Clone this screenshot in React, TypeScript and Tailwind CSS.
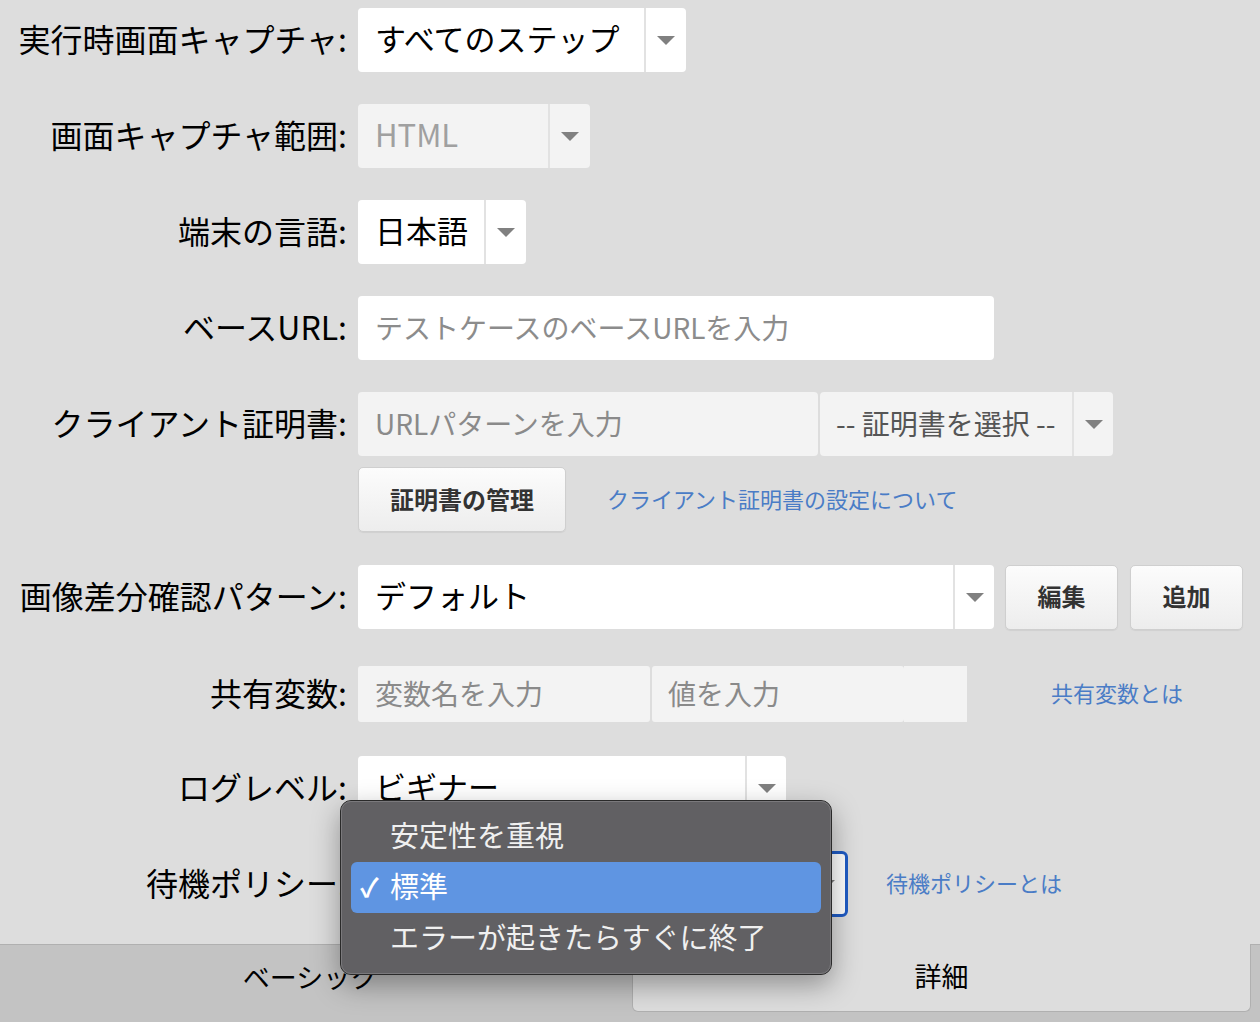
import React from "react";

const Tri = () => (
  <div className="w-0 h-0 border-l-[9px] border-r-[9px] border-t-[9px] border-l-transparent border-r-transparent border-t-[#808080]" />
);

function Arrow({ cls }: { cls: string }) {
  return (
    <div className={"flex items-center h-full " + cls}>
      <div className="w-[2px] h-full bg-[#e2e2e2]" />
      <div className="flex-1 flex items-center justify-center">
        <Tri />
      </div>
    </div>
  );
}

function Row({ label, children, cls }: { label: string; children: React.ReactNode; cls: string }) {
  return (
    <div className={"flex items-center h-[64px] " + cls}>
      <div className="w-[347px] shrink-0 text-right text-[32px] text-black whitespace-nowrap leading-none pb-[4px]">{label}</div>
      <div className="ml-[11px] flex items-center h-full">{children}</div>
    </div>
  );
}

const btn =
  "flex items-center justify-center rounded-[5px] border border-[#cfcfcf] bg-gradient-to-b from-[#fcfcfc] to-[#ededed] shadow-[0_1px_1px_rgba(0,0,0,0.06)] text-[24px] font-bold text-[#333] pb-[2px]";

const selText = "flex-1 flex items-center pl-[17px] text-[31px] pb-[4px]";

export default function App() {
  return (
    <div className="relative w-[1260px] h-[1022px] overflow-hidden bg-[#dddddd] font-['Noto_Sans_CJK_JP','Noto_Sans',sans-serif]">
      <div className="flex flex-col pt-[8px]">
        <Row label="実行時画面キャプチャ:" cls="">
          <div className="flex h-[64px] w-[328px] rounded-[4px] bg-white">
            <div className={selText + " text-black"}>すべてのステップ</div>
            <Arrow cls="w-[42px]" />
          </div>
        </Row>

        <Row label="画面キャプチャ範囲:" cls="mt-[32px]">
          <div className="flex h-[64px] w-[232px] rounded-[4px] bg-[#f3f3f3]">
            <div className={selText + " text-[#a0a0a0]"}>HTML</div>
            <Arrow cls="w-[42px]" />
          </div>
        </Row>

        <Row label="端末の言語:" cls="mt-[32px]">
          <div className="flex h-[64px] w-[168px] rounded-[4px] bg-white">
            <div className={selText + " text-black"}>日本語</div>
            <Arrow cls="w-[42px]" />
          </div>
        </Row>

        <Row label="ベースURL:" cls="mt-[32px]">
          <div className="flex items-center h-[64px] w-[636px] rounded-[4px] bg-white pl-[17px] pb-[3px] text-[28px] text-[#8c8c8c]">
            テストケースのベースURLを入力
          </div>
        </Row>

        <Row label="クライアント証明書:" cls="mt-[32px]">
          <div className="flex items-center h-[64px] w-[460px] rounded-[4px] bg-[#f3f3f3] pl-[17px] pb-[3px] text-[28px] text-[#8a8a8a]">
            URLパターンを入力
          </div>
          <div className="ml-[2px] flex h-[64px] w-[293px] rounded-[4px] bg-[#f3f3f3]">
            <div className="flex-1 flex items-center pl-[16px] pb-[3px] text-[28px] text-[#555]">-- 証明書を選択 --</div>
            <Arrow cls="w-[41px]" />
          </div>
        </Row>

        <div className="flex items-center h-[65px] mt-[11px]">
          <div className="w-[358px] shrink-0" />
          <div className={btn + " w-[208px] h-[65px]"}>証明書の管理</div>
          <div className="ml-[41px] pb-[3px] text-[22px] text-[#4a7cc6]">クライアント証明書の設定について</div>
        </div>

        <Row label="画像差分確認パターン:" cls="mt-[33px]">
          <div className="flex h-[64px] w-[636px] rounded-[4px] bg-white">
            <div className={selText + " text-black"}>デフォルト</div>
            <Arrow cls="w-[41px]" />
          </div>
          <div className={btn + " ml-[11px] w-[113px] h-[65px]"}>編集</div>
          <div className={btn + " ml-[12px] w-[113px] h-[65px]"}>追加</div>
        </Row>

        <Row label="共有変数:" cls="mt-[33px]">
          <div className="flex items-center h-[56px] w-[292px] rounded-[3px] bg-[#f3f3f3] pl-[17px] pb-[3px] text-[28px] text-[#8a8a8a]">
            変数名を入力
          </div>
          <div className="ml-[2px] flex items-center h-[56px] w-[252px] rounded-[3px] bg-[#f3f3f3] pl-[16px] pb-[3px] text-[28px] text-[#8a8a8a]">
            値を入力
          </div>
          <div className="h-[56px] w-[63px] bg-[#f3f3f3]" />
          <div className="ml-[84px] pb-[3px] text-[22px] text-[#4a7cc6]">共有変数とは</div>
        </Row>

        <Row label="ログレベル:" cls="mt-[30px]">
          <div className="flex h-[64px] w-[428px] rounded-[4px] bg-white">
            <div className={selText + " text-black"}>ビギナー</div>
            <Arrow cls="w-[41px]" />
          </div>
        </Row>

        <Row label="待機ポリシー:" cls="mt-[32px]">
          <div className="flex h-[66px] w-[490px] rounded-[6px] bg-white border-[3px] border-[#1f5bc4]">
            <div className="flex-1" />
            <Arrow cls="w-[41px]" />
          </div>
          <div className="ml-[38px] pb-[3px] text-[22px] text-[#4a7cc6]">待機ポリシーとは</div>
        </Row>

        <div className="mt-[28px] flex h-[78px] bg-[#c3c3c3]">
          <div className="w-[632px] h-[68px] border-t border-[#b0b0b0] flex items-center justify-center pr-[12px] pb-[2px] text-[27px] text-black">
            ベーシック
          </div>
          <div className="w-[619px] h-[68px] bg-[#dddddd] border-x border-b border-[#b0b0b0] rounded-b-[6px] flex items-center justify-center pb-[2px] text-[27px] text-black">
            詳細
          </div>
          <div className="flex-1 border-t border-[#b0b0b0]" />
        </div>
      </div>

      <div className="absolute left-[340px] top-[800px] w-[492px] rounded-[11px] border border-[#2a2a2a] bg-[#616063] shadow-[0_10px_28px_rgba(0,0,0,0.35)]">
        <div className="rounded-[10px] border border-[#7a797c] px-[9px] py-[9px]">
          <div className="h-[51px] flex items-center pl-[39px] pb-[3px] text-[29px] text-[#f0f0f0]">安定性を重視</div>
          <div className="h-[51px] flex items-center rounded-[6px] bg-[#5f95e2] pb-[3px] text-[29px] text-white">
            <span className="w-[39px] pl-[9px] text-[26px] font-bold leading-none">✓</span>
            <span>標準</span>
          </div>
          <div className="h-[51px] flex items-center pl-[39px] pb-[3px] text-[29px] text-[#f0f0f0]">エラーが起きたらすぐに終了</div>
        </div>
      </div>
    </div>
  );
}
